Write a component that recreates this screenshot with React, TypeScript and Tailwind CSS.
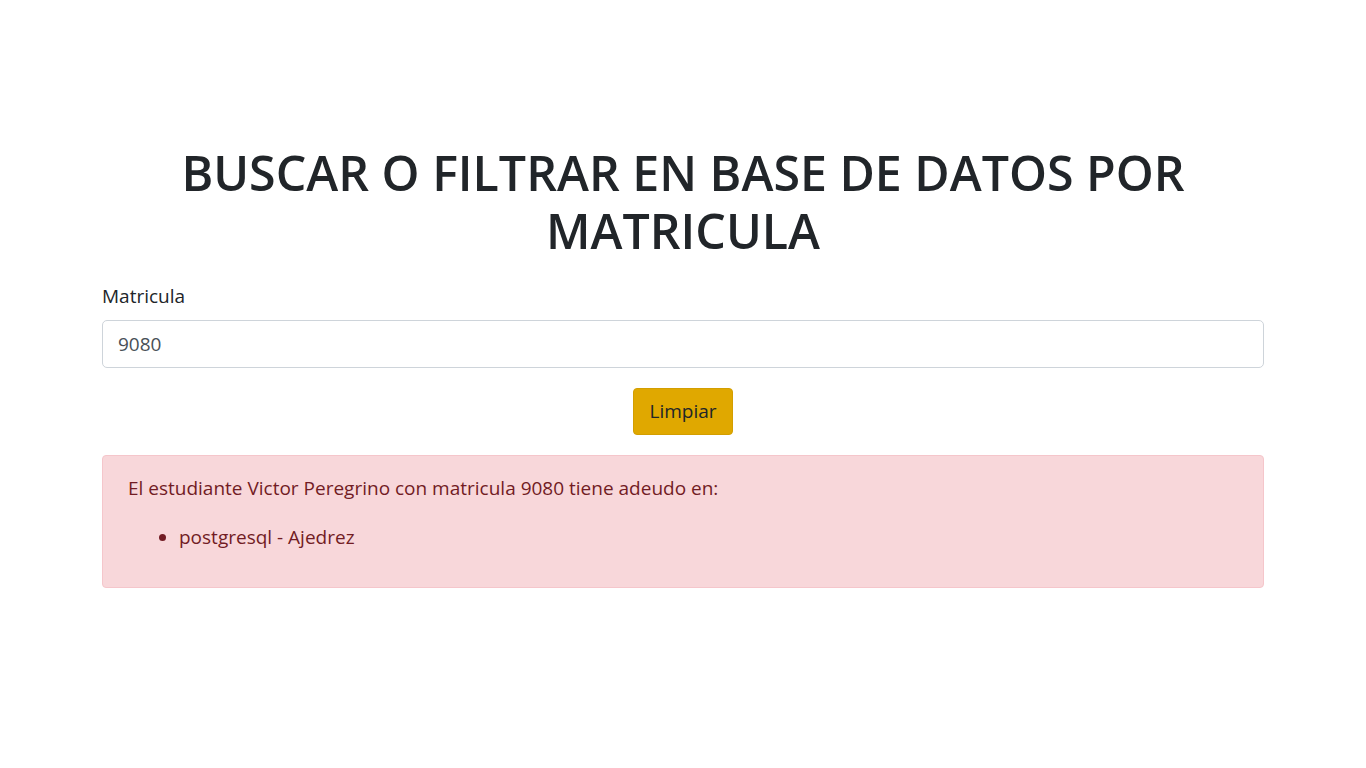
export default function App() {
  return (
    <div className="min-h-screen bg-white text-[#212529]" style={{ fontFamily: '"Open Sans", "Noto Sans", sans-serif' }}>
      <div className="mx-auto w-[1162px] pt-[143px]">
        <h1 className="text-center text-[48.3px] font-semibold leading-[58px] text-[#212529]">
          BUSCAR O FILTRAR EN BASE DE DATOS POR MATRICULA
        </h1>

        <div className="mt-[24px]">
          <label className="block text-[19px] leading-[27px] text-[#212529]">Matricula</label>
          <input
            type="text"
            defaultValue="9080"
            className="mt-[10px] block h-[48px] w-full rounded-[5px] border border-[#ced4da] px-[15px] text-[19px] text-[#495057] outline-none"
          />
        </div>

        <div className="mt-[20px] flex justify-center">
          <button className="h-[47px] rounded-[4px] border border-[#d39e00] bg-[#e0a800] px-[15px] text-[19px] text-[#212529]">
            Limpiar
          </button>
        </div>

        <div className="mt-[20px] rounded-[4px] border border-[#f5c6cb] bg-[#f8d7da] px-[25px] pt-[19px] pb-[36px] text-[19px] leading-[27px] text-[#721c24]">
          <p>El estudiante Victor Peregrino con matricula 9080 tiene adeudo en:</p>
          <ul className="mt-[22px] list-disc pl-[51px]">
            <li>postgresql - Ajedrez</li>
          </ul>
        </div>
      </div>
    </div>
  );
}
